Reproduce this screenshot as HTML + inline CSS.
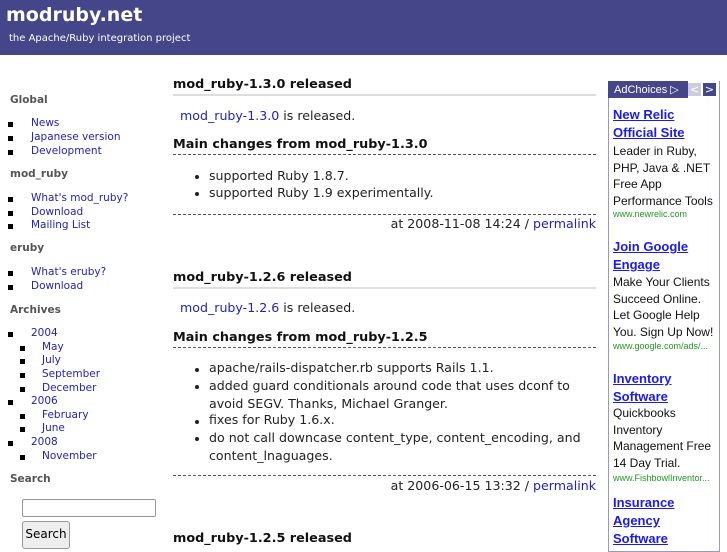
<!DOCTYPE html>
<html><head><meta charset="utf-8"><style>
body{margin:0;width:727px;height:545px;overflow:hidden;background:#fff;font-family:"DejaVu Sans","Liberation Sans",sans-serif;position:relative}
.hdr{position:absolute;left:0;top:0;width:727px;height:55px;background:#454589;color:#fff}
.hdr .t{position:absolute;left:6px;top:4px;font-size:19px;font-weight:bold}
.hdr .s{position:absolute;left:9px;top:33px;font-size:10px}
.a{position:absolute;white-space:nowrap}
.sh{font-size:10.5px;font-weight:bold;color:#555;left:10px}
.li{font-size:10.5px;color:#2222bb}
.bu{position:absolute;width:5px;height:5px;background:#000}
.h{font-size:12.8px;font-weight:bold;color:#111;left:173px}
.c{font-size:12.6px;color:#222}
.lk{color:#2222bb}
.ln{position:absolute;left:173px;width:423px}
.dot{position:absolute;width:4px;height:4px;border-radius:50%;background:#222;left:195px}
.ad{position:absolute;left:608px;top:81px;width:110px;height:470px;border:1px solid #9999bb;border-top:none}
.adh{position:absolute;left:608px;top:81px;width:80px;height:17px;background:#454589;color:#fff;font:11px "Liberation Sans",sans-serif}
.at{font:bold 13px "Liberation Sans",sans-serif;color:#1a1aee;text-decoration:underline;left:613px;line-height:18px}
.ab{font:12px "Liberation Sans",sans-serif;color:#111;left:613px;line-height:16.5px}
.au{font:9px "Liberation Sans",sans-serif;color:#229922;left:613px}
</style></head><body>
<div class="hdr"><div class="t">modruby.net</div><div class="s">the Apache/Ruby integration project</div></div>

<div class="a sh" style="top:94px">Global</div>
<div class="a li" style="left:31px;top:117px">News</div>
<div class="a li" style="left:31px;top:131px">Japanese version</div>
<div class="a li" style="left:31px;top:145px">Development</div>
<div class="a sh" style="top:168px">mod_ruby</div>
<div class="a li" style="left:31px;top:192px">What's mod_ruby?</div>
<div class="a li" style="left:31px;top:206px">Download</div>
<div class="a li" style="left:31px;top:219px">Mailing List</div>
<div class="a sh" style="top:242px">eruby</div>
<div class="a li" style="left:31px;top:266px">What's eruby?</div>
<div class="a li" style="left:31px;top:280px">Download</div>
<div class="a sh" style="top:304px">Archives</div>
<div class="a li" style="left:31px;top:327px">2004</div>
<div class="a li" style="left:42px;top:341px">May</div>
<div class="a li" style="left:42px;top:354px">July</div>
<div class="a li" style="left:42px;top:368px">September</div>
<div class="a li" style="left:42px;top:382px">December</div>
<div class="a li" style="left:31px;top:395px">2006</div>
<div class="a li" style="left:42px;top:409px">February</div>
<div class="a li" style="left:42px;top:422px">June</div>
<div class="a li" style="left:31px;top:436px">2008</div>
<div class="a li" style="left:42px;top:450px">November</div>
<div class="bu" style="left:8px;top:122px"></div><div class="bu" style="left:8px;top:136px"></div><div class="bu" style="left:8px;top:150px"></div>
<div class="bu" style="left:8px;top:197px"></div><div class="bu" style="left:8px;top:211px"></div><div class="bu" style="left:8px;top:224px"></div>
<div class="bu" style="left:8px;top:271px"></div><div class="bu" style="left:8px;top:285px"></div>
<div class="bu" style="left:8px;top:332px"></div><div class="bu" style="left:20px;top:346px"></div><div class="bu" style="left:20px;top:359px"></div><div class="bu" style="left:20px;top:373px"></div><div class="bu" style="left:20px;top:387px"></div>
<div class="bu" style="left:8px;top:400px"></div><div class="bu" style="left:20px;top:414px"></div><div class="bu" style="left:20px;top:427px"></div>
<div class="bu" style="left:8px;top:441px"></div><div class="bu" style="left:20px;top:455px"></div>
<div class="a sh" style="top:473px">Search</div>
<div class="a" style="left:22px;top:499px;width:132px;height:16px;border:1px solid #999;border-radius:2px"></div>
<div class="a" style="left:22px;top:521px;width:46px;height:26px;border:1px solid #999;border-radius:3px;background:#eee;font-size:12px;text-align:center;line-height:24px">Search</div>

<div class="a h" style="top:77px">mod_ruby-1.3.0 released</div>
<div class="ln" style="top:94px;border-top:2px solid #ddd"></div>
<div class="a c" style="left:180px;top:108px"><span class="lk">mod_ruby-1.3.0</span> is released.</div>
<div class="a h" style="top:137px">Main changes from mod_ruby-1.3.0</div>
<div class="ln" style="top:154px;border-top:1px dashed #555"></div>
<div class="dot" style="top:175px"></div><div class="a c" style="left:209px;top:168px">supported Ruby 1.8.7.</div>
<div class="dot" style="top:192px"></div><div class="a c" style="left:209px;top:185px">supported Ruby 1.9 experimentally.</div>
<div class="ln" style="top:214px;border-top:1px dashed #555"></div>
<div class="a c" style="right:131px;top:216px">at 2008-11-08 14:24 / <span class="lk">permalink</span></div>

<div class="a h" style="top:270px">mod_ruby-1.2.6 released</div>
<div class="ln" style="top:287px;border-top:2px solid #ddd"></div>
<div class="a c" style="left:180px;top:300px"><span class="lk">mod_ruby-1.2.6</span> is released.</div>
<div class="a h" style="top:330px">Main changes from mod_ruby-1.2.5</div>
<div class="ln" style="top:347px;border-top:1px dashed #555"></div>
<div class="dot" style="top:368px"></div><div class="a c" style="left:209px;top:360px">apache/rails-dispatcher.rb supports Rails 1.1.</div>
<div class="dot" style="top:385px"></div><div class="a c" style="left:209px;top:377px;line-height:17.5px">added guard conditionals around code that uses dconf to<br>avoid SEGV. Thanks, Michael Granger.</div>
<div class="dot" style="top:420px"></div><div class="a c" style="left:209px;top:412px">fixes for Ruby 1.6.x.</div>
<div class="dot" style="top:437px"></div><div class="a c" style="left:209px;top:429px;line-height:17.5px">do not call downcase content_type, content_encoding, and<br>content_lnaguages.</div>
<div class="ln" style="top:475px;border-top:1px dashed #555"></div>
<div class="a c" style="right:131px;top:478px">at 2006-06-15 13:32 / <span class="lk">permalink</span></div>
<div class="a h" style="top:531px">mod_ruby-1.2.5 released</div>

<div class="ad"></div>
<div class="adh"><span style="position:absolute;left:6px;top:2px">AdChoices ▷</span></div>
<div class="a" style="left:688px;top:83px;width:13px;height:13px;background:#ccd;color:#fff;font-size:11px;text-align:center;line-height:13px">&lt;</div>
<div class="a" style="left:703px;top:83px;width:13px;height:13px;background:#454589;color:#fff;font-size:11px;text-align:center;line-height:13px">&gt;</div>
<div class="a at" style="top:106px">New Relic<br>Official Site</div>
<div class="a ab" style="top:143px">Leader in Ruby,<br>PHP, Java &amp; .NET<br>Free App<br>Performance Tools</div>
<div class="a au" style="top:209px">www.newrelic.com</div>
<div class="a at" style="top:238px">Join Google<br>Engage</div>
<div class="a ab" style="top:274px">Make Your Clients<br>Succeed Online.<br>Let Google Help<br>You. Sign Up Now!</div>
<div class="a au" style="top:341px">www.google.com/ads/...</div>
<div class="a at" style="top:370px">Inventory<br>Software</div>
<div class="a ab" style="top:405px">Quickbooks<br>Inventory<br>Management Free<br>14 Day Trial.</div>
<div class="a au" style="top:473px">www.FishbowlInventor...</div>
<div class="a at" style="top:494px">Insurance<br>Agency<br>Software</div>
</body></html>
